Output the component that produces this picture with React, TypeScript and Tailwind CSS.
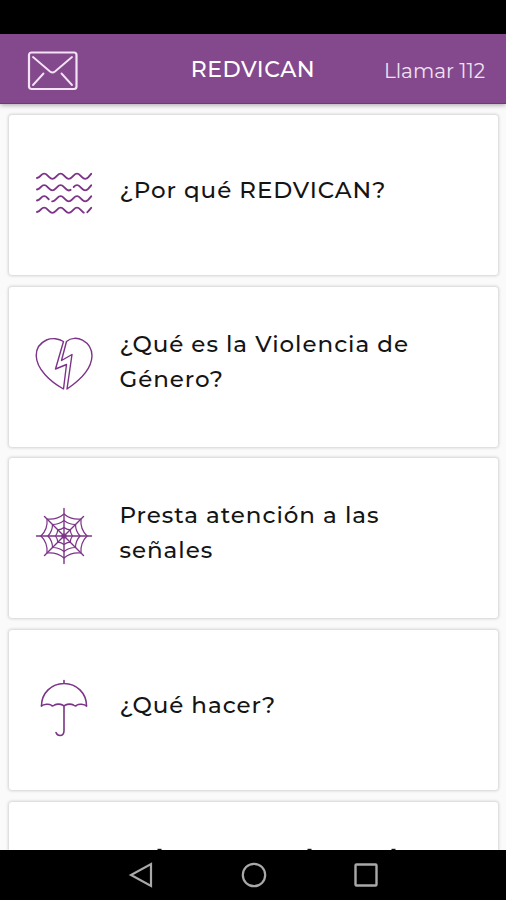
import type { ReactNode } from 'react'

const WAVE = 'q2.2 -.4 4 -2.6 q3.2 -3.6 6.4 0 l1.8 1.8 q3.2 3.4 6.4 0 l1.8 -1.8 q3.2 -3.6 6.4 0 l1.8 1.8 q3.2 3.4 6.4 0 l1.8 -1.8 q3.2 -3.6 6.4 0 l1.8 1.8 q3.2 3.4 6.4 0 l2.8 -3.4'

function WavesIcon() {
  return (
    <svg width="58" height="58" viewBox="0 0 58 58" fill="none" stroke="#7c3488" strokeWidth="1.9" strokeLinecap="round">
      <path d={`M2 14${WAVE}`} />
      <path d={`M2 25.5${WAVE}`} strokeDasharray="40 4 100" />
      <path d={`M2 36.5${WAVE}`} strokeDasharray="14 4 100" />
      <path d={`M2 48${WAVE}`} strokeDasharray="56 4 100" />
    </svg>
  )
}

function BrokenHeartIcon() {
  return (
    <svg width="58" height="58" viewBox="0 0 58 58" fill="none" stroke="#7c3488" strokeWidth="1.4" strokeLinejoin="round" strokeLinecap="round">
      <path d="M28.500 6.500C24 3.500 17 2.500 11.500 5C5 8 1.200 13.500 1.200 20.500C1.500 34 15 46.500 28.500 54L31.500 29.500L20.500 34L28.500 6.500Z" />
      <path d="M31.500 6.500C36 2.500 42.500 2.500 47.500 5.200C53.500 8.500 57 14.500 57 21C56.500 34 44 46 32 54L37 19.500L26.500 25.500L31.500 6.500Z" />
    </svg>
  )
}

function WebIcon() {
  return (
    <svg width="58" height="58" viewBox="0 0 58 58" fill="none" stroke="#7c3488" strokeWidth="1.2" strokeLinecap="round">
      <path d="M29 1.500V56.500M1.500 29H56.500M9.500 9.500L48.500 48.500M48.500 9.500L9.500 48.500" strokeWidth="1.400" />
      <path d="M29 7Q36 13 46 12Q45 22 52 29Q45 36 46 46Q36 45 29 51Q22 45 12 46Q13 36 6 29Q13 22 12 12Q22 13 29 7Z" />
      <path d="M29 13.500Q34 17.500 40.500 17.500Q40.500 24 45 29Q40.500 34 40.500 40.500Q34 40.500 29 44.500Q24 40.500 17.500 40.500Q17.500 34 13 29Q17.500 24 17.500 17.500Q24 17.500 29 13.500Z" />
      <path d="M29 20.500Q31.500 22.500 35.200 22.800Q35.500 26.500 37.500 29Q35.500 31.500 35.200 35.200Q31.500 35.500 29 37.500Q26.500 35.500 22.800 35.200Q22.500 31.500 20.500 29Q22.500 26.500 22.800 22.800Q26.500 22.500 29 20.500Z" />
      <circle cx="29" cy="29" r="2" />
    </svg>
  )
}

function UmbrellaIcon() {
  return (
    <svg width="58" height="58" viewBox="0 0 58 58" fill="none" stroke="#7c3488" strokeWidth="1.6" strokeLinecap="round" strokeLinejoin="round">
      <path d="M29 1.500V4.500M6.500 27C6.500 14 16.500 4.500 29 4.500S51.500 14 51.500 27" />
      <path d="M6.500 27C8.500 24.800 14.500 24.800 16 26Q17.500 27.800 19.500 26C21.500 24.800 25.500 24.800 27.500 26Q29 27.500 30.500 26C32.500 24.800 36.500 24.800 38.500 26Q40.500 27.800 42 26C43.500 24.800 49.500 24.800 51.500 27" />
      <path d="M29 26.500V51.500C29 55.500 27 56.500 25 56.500C22.500 56.500 21.500 55 21 53.500" />
    </svg>
  )
}

interface Item {
  icon: ReactNode
  lines: string[]
}

const ITEMS: Item[] = [
  { icon: <WavesIcon />, lines: ['¿Por qué REDVICAN?'] },
  { icon: <BrokenHeartIcon />, lines: ['¿Qué es la Violencia de', 'Género?'] },
  { icon: <WebIcon />, lines: ['Presta atención a las', 'señales'] },
  { icon: <UmbrellaIcon />, lines: ['¿Qué hacer?'] },
]

function Header() {
  return (
    <header className="relative z-10 grid h-[70px] shrink-0 grid-cols-[1fr_auto_1fr] items-center border-b border-[#6f3a79] bg-[#83498c] text-white shadow-[0_1px_5px_rgba(0,0,0,0.35)]">
      <svg className="ml-[27px] mt-1" width="51" height="40" viewBox="0 0 51 40" fill="none" stroke="#f3e3f5" strokeLinecap="round" strokeLinejoin="round">
        <rect x="2" y="1.500" width="47.500" height="36.500" rx="2.500" strokeWidth="2.200" />
        <path d="M6 6L23 20.500Q25.500 22.500 28 20.500L45 6M16.500 22.500L6 34M34.500 22.500L45 34" strokeWidth="1.900" />
      </svg>
      <h1 className="mt-0.5 text-[22px] font-medium tracking-[0.6px]">REDVICAN</h1>
      <span className="mr-[21px] mt-1 justify-self-end text-[20px] text-[#f0e2f2]">Llamar 112</span>
    </header>
  )
}

function Card({ icon, lines }: Item) {
  return (
    <div className="flex h-[160px] shrink-0 items-center rounded-[3px] bg-white pl-[26px] shadow-[0_0_3px_1px_rgba(0,0,0,0.16)]">
      <div className="-mt-[5px] shrink-0">{icon}</div>
      <div className="-mt-2.5 ml-[26.500px] text-[23px] font-medium leading-[35px] tracking-[0.95px] text-[#141414]">
        {lines.map(line => (
          <p key={line} className="whitespace-nowrap">{line}</p>
        ))}
      </div>
    </div>
  )
}

function NavBar() {
  return (
    <nav className="flex h-[50px] shrink-0 items-center justify-center gap-[84.500px] bg-black pl-px">
      {/* back, home, recents */}
      <svg width="28" height="28" viewBox="0 0 28 28" fill="none" stroke="#a9a9a9" strokeWidth="2.200">
        <path d="M24 3V25L4 14Z" />
      </svg>
      <svg width="28" height="28" viewBox="0 0 28 28" fill="none" stroke="#a9a9a9" strokeWidth="2.200">
        <circle cx="14" cy="14" r="11.200" />
      </svg>
      <svg width="28" height="28" viewBox="0 0 28 28" fill="none" stroke="#a9a9a9" strokeWidth="2.400">
        <rect x="3.500" y="3.500" width="21" height="21" rx="1" />
      </svg>
    </nav>
  )
}

export default function App() {
  return (
    <div className="flex h-[900px] w-[506px] flex-col overflow-hidden bg-[#fafafa] font-['Montserrat','Inter',sans-serif]">
      <div className="h-[34px] shrink-0 bg-black" />
      <Header />
      <main className="flex min-h-0 flex-1 flex-col gap-[11.700px] overflow-hidden pl-[9px] pr-2 pt-[11px]">
        {ITEMS.map(item => (
          <Card key={item.lines[0]} {...item} />
        ))}
        <div className="flex min-h-0 flex-1 items-end rounded-t-[3px] bg-white shadow-[0_0_3px_1px_rgba(0,0,0,0.16)]">
          {/* tops of the next title, cut by the nav bar */}
          <svg className="h-[2px] w-full" viewBox="0 0 488 2" fill="#141414">
            <rect x="148" y="0.800" width="4" height="1.200" />
            <rect x="298" y="0.800" width="4" height="1.200" />
            <rect x="382" y="0.800" width="4" height="1.200" />
          </svg>
        </div>
      </main>
      <NavBar />
    </div>
  )
}
